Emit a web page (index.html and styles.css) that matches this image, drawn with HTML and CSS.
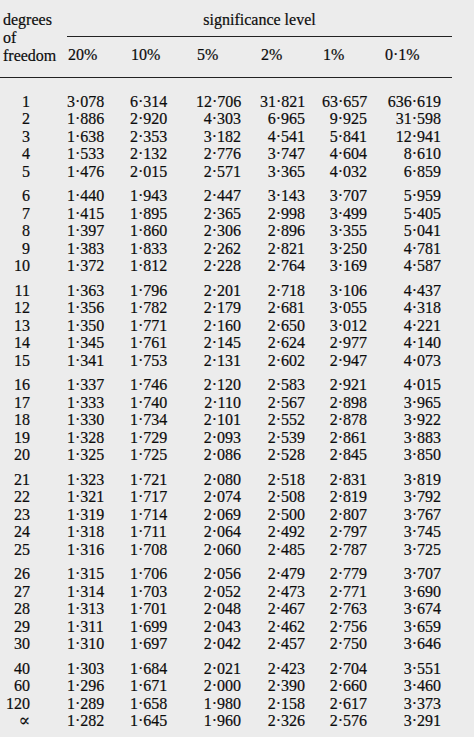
FILE: index.html
```html
<!DOCTYPE html>
<html lang="en">
<head>
<meta charset="utf-8">
<title>Percentage points of the t-distribution</title>
<link rel="stylesheet" href="styles.css">
</head>
<body>
<div class="table">
  <div class="head">
    <div class="df-head">degrees<br>of<br>freedom</div>
    <div class="sig">significance level</div>
    <div class="lvl">20%</div>
    <div class="lvl">10%</div>
    <div class="lvl">5%</div>
    <div class="lvl">2%</div>
    <div class="lvl">1%</div>
    <div class="lvl">0·1%</div>
  </div>

  <div class="group first">
    <div class="row"><span>1</span><span>3·078</span><span>6·314</span><span>12·706</span><span>31·821</span><span>63·657</span><span>636·619</span></div>
    <div class="row"><span>2</span><span>1·886</span><span>2·920</span><span>4·303</span><span>6·965</span><span>9·925</span><span>31·598</span></div>
    <div class="row"><span>3</span><span>1·638</span><span>2·353</span><span>3·182</span><span>4·541</span><span>5·841</span><span>12·941</span></div>
    <div class="row"><span>4</span><span>1·533</span><span>2·132</span><span>2·776</span><span>3·747</span><span>4·604</span><span>8·610</span></div>
    <div class="row"><span>5</span><span>1·476</span><span>2·015</span><span>2·571</span><span>3·365</span><span>4·032</span><span>6·859</span></div>
  </div>
  <div class="group">
    <div class="row"><span>6</span><span>1·440</span><span>1·943</span><span>2·447</span><span>3·143</span><span>3·707</span><span>5·959</span></div>
    <div class="row"><span>7</span><span>1·415</span><span>1·895</span><span>2·365</span><span>2·998</span><span>3·499</span><span>5·405</span></div>
    <div class="row"><span>8</span><span>1·397</span><span>1·860</span><span>2·306</span><span>2·896</span><span>3·355</span><span>5·041</span></div>
    <div class="row"><span>9</span><span>1·383</span><span>1·833</span><span>2·262</span><span>2·821</span><span>3·250</span><span>4·781</span></div>
    <div class="row"><span>10</span><span>1·372</span><span>1·812</span><span>2·228</span><span>2·764</span><span>3·169</span><span>4·587</span></div>
  </div>
  <div class="group">
    <div class="row"><span>11</span><span>1·363</span><span>1·796</span><span>2·201</span><span>2·718</span><span>3·106</span><span>4·437</span></div>
    <div class="row"><span>12</span><span>1·356</span><span>1·782</span><span>2·179</span><span>2·681</span><span>3·055</span><span>4·318</span></div>
    <div class="row"><span>13</span><span>1·350</span><span>1·771</span><span>2·160</span><span>2·650</span><span>3·012</span><span>4·221</span></div>
    <div class="row"><span>14</span><span>1·345</span><span>1·761</span><span>2·145</span><span>2·624</span><span>2·977</span><span>4·140</span></div>
    <div class="row"><span>15</span><span>1·341</span><span>1·753</span><span>2·131</span><span>2·602</span><span>2·947</span><span>4·073</span></div>
  </div>
  <div class="group">
    <div class="row"><span>16</span><span>1·337</span><span>1·746</span><span>2·120</span><span>2·583</span><span>2·921</span><span>4·015</span></div>
    <div class="row"><span>17</span><span>1·333</span><span>1·740</span><span>2·110</span><span>2·567</span><span>2·898</span><span>3·965</span></div>
    <div class="row"><span>18</span><span>1·330</span><span>1·734</span><span>2·101</span><span>2·552</span><span>2·878</span><span>3·922</span></div>
    <div class="row"><span>19</span><span>1·328</span><span>1·729</span><span>2·093</span><span>2·539</span><span>2·861</span><span>3·883</span></div>
    <div class="row"><span>20</span><span>1·325</span><span>1·725</span><span>2·086</span><span>2·528</span><span>2·845</span><span>3·850</span></div>
  </div>
  <div class="group">
    <div class="row"><span>21</span><span>1·323</span><span>1·721</span><span>2·080</span><span>2·518</span><span>2·831</span><span>3·819</span></div>
    <div class="row"><span>22</span><span>1·321</span><span>1·717</span><span>2·074</span><span>2·508</span><span>2·819</span><span>3·792</span></div>
    <div class="row"><span>23</span><span>1·319</span><span>1·714</span><span>2·069</span><span>2·500</span><span>2·807</span><span>3·767</span></div>
    <div class="row"><span>24</span><span>1·318</span><span>1·711</span><span>2·064</span><span>2·492</span><span>2·797</span><span>3·745</span></div>
    <div class="row"><span>25</span><span>1·316</span><span>1·708</span><span>2·060</span><span>2·485</span><span>2·787</span><span>3·725</span></div>
  </div>
  <div class="group">
    <div class="row"><span>26</span><span>1·315</span><span>1·706</span><span>2·056</span><span>2·479</span><span>2·779</span><span>3·707</span></div>
    <div class="row"><span>27</span><span>1·314</span><span>1·703</span><span>2·052</span><span>2·473</span><span>2·771</span><span>3·690</span></div>
    <div class="row"><span>28</span><span>1·313</span><span>1·701</span><span>2·048</span><span>2·467</span><span>2·763</span><span>3·674</span></div>
    <div class="row"><span>29</span><span>1·311</span><span>1·699</span><span>2·043</span><span>2·462</span><span>2·756</span><span>3·659</span></div>
    <div class="row"><span>30</span><span>1·310</span><span>1·697</span><span>2·042</span><span>2·457</span><span>2·750</span><span>3·646</span></div>
  </div>
  <div class="group">
    <div class="row"><span>40</span><span>1·303</span><span>1·684</span><span>2·021</span><span>2·423</span><span>2·704</span><span>3·551</span></div>
    <div class="row"><span>60</span><span>1·296</span><span>1·671</span><span>2·000</span><span>2·390</span><span>2·660</span><span>3·460</span></div>
    <div class="row"><span>120</span><span>1·289</span><span>1·658</span><span>1·980</span><span>2·158</span><span>2·617</span><span>3·373</span></div>
    <div class="row"><span class="inf">∝</span><span>1·282</span><span>1·645</span><span>1·960</span><span>2·326</span><span>2·576</span><span>3·291</span></div>
  </div>
</div>
</body>
</html>
```

FILE: styles.css
```css
html, body {
  margin: 0;
  padding: 0;
  background: #ececec;
}

body {
  font-family: "Liberation Serif", "Times New Roman", serif;
  font-size: 16px;
  color: #0c0c0c;
  -webkit-text-stroke: 0.2px #0c0c0c;
}

.table {
  width: 452px;
}

.head,
.row {
  display: grid;
  grid-template-columns: 67px 63px 66px 64px 62px 63px 67px;
}

.head {
  border-bottom: 1.5px solid #222;
  line-height: 18px;
}

.df-head {
  grid-column: 1;
  grid-row: 1 / 3;
  padding: 10.6px 0 12.4px 3px;
  white-space: nowrap;
}

.sig {
  grid-column: 2 / 8;
  grid-row: 1;
  text-align: center;
  padding: 10.6px 0 6.7px;
  border-bottom: 1.5px solid #222;
}

.lvl {
  grid-row: 2;
  padding: 9.8px 0 12.4px 1px;
}

.lvl:last-child {
  padding-left: 0;
}

.group {
  margin-top: 7px;
}

.group.first {
  margin-top: 14.7px;
}

.row {
  line-height: 17.5px;
  height: 17.5px;
}

.row span {
  text-align: right;
  white-space: nowrap;
}

.row span:nth-child(1) { padding-right: 37px; }
.row span:nth-child(2) { padding-right: 27px; }
.row span:nth-child(3) { padding-right: 30px; }
.row span:nth-child(4) { padding-right: 19px; }
.row span:nth-child(5) { padding-right: 17px; }
.row span:nth-child(6) { padding-right: 18px; }
.row span:nth-child(7) { padding-right: 11px; }

.row span.inf {
  font-family: "DejaVu Serif", "Liberation Serif", serif;
  font-size: 17px;
  line-height: 17.5px;
  padding-right: 37px;
}
```
